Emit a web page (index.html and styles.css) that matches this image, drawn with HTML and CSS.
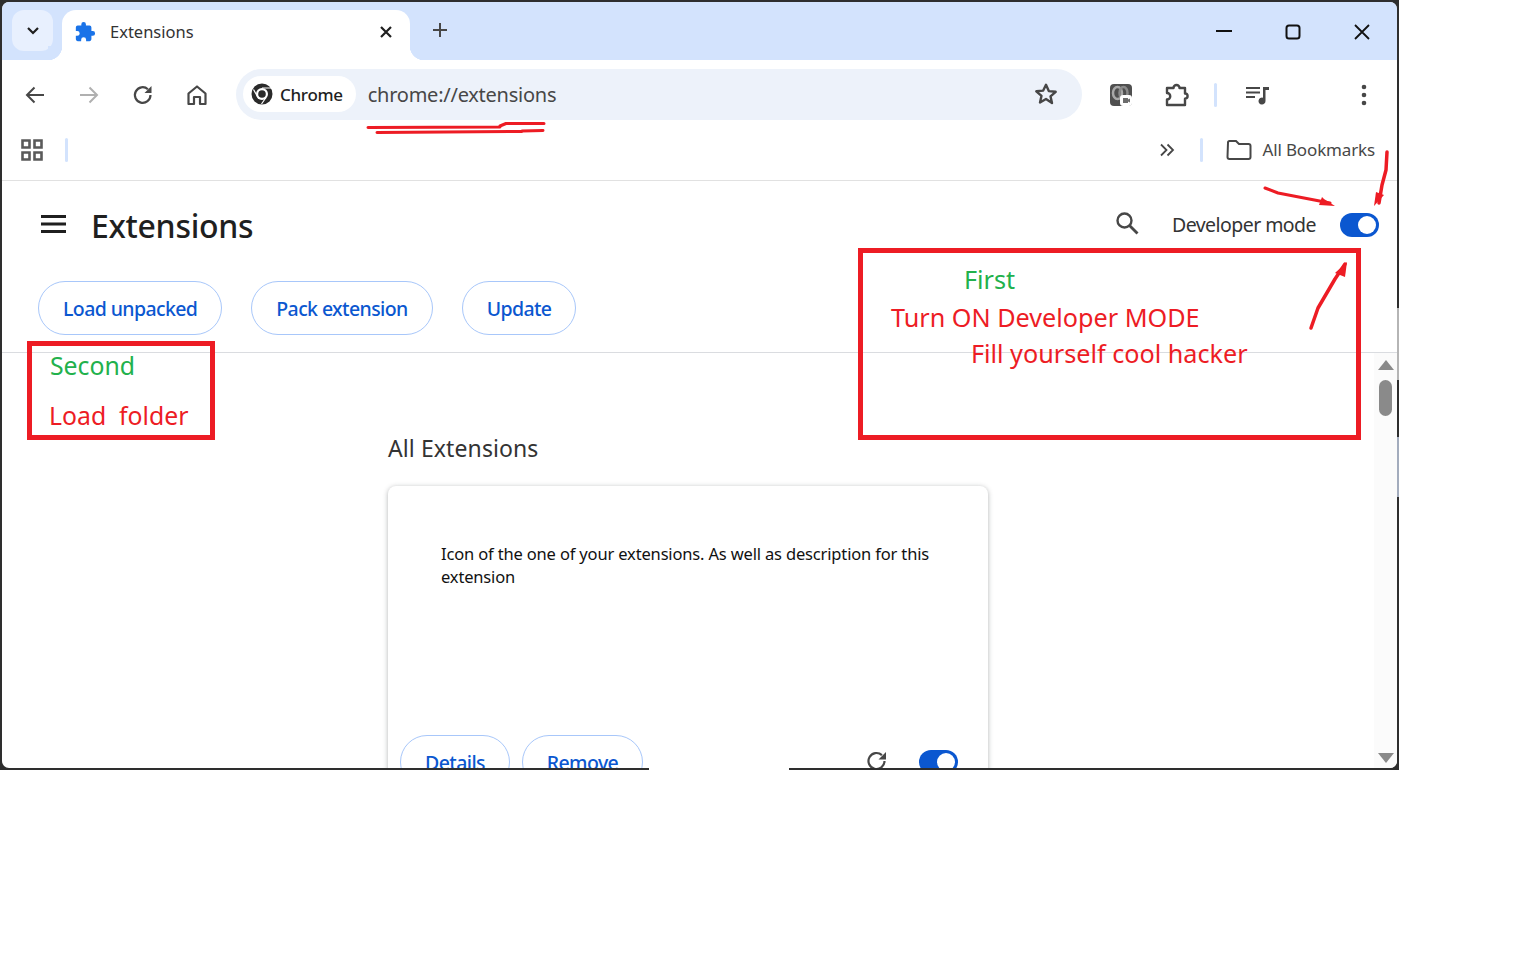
FILE: index.html
```html
<!DOCTYPE html>
<html lang="en">
<head>
  <meta charset="UTF-8">
  <title>Extensions</title>
  <link rel="stylesheet" href="styles.css">
</head>
<body>
  <div class="frame">
    <div class="window">
      <div class="tabstrip">
        <div class="tab-search">
          <svg width="16" height="16" viewBox="0 0 16 16"><path d="M3 5l5 5 5-5" fill="none" stroke="#1f1f1f" stroke-width="2.200"/></svg>
        </div>
        <div class="tab">
          <svg class="tab-icon" width="22" height="22" viewBox="0 0 24 24"><path d="M20.500 11H19V7a2 2 0 0 0-2-2h-4V3.500a2.500 2.500 0 0 0-5 0V5H4a2 2 0 0 0-2 2v3.800h1.500a2.700 2.700 0 0 1 0 5.400H2V20a2 2 0 0 0 2 2h3.800v-1.500a2.700 2.700 0 0 1 5.400 0V22H17a2 2 0 0 0 2-2v-4h1.500a2.500 2.500 0 0 0 0-5z" fill="#1a73e8"/></svg>
          <span class="tab-title">Extensions</span>
          <svg class="tab-close" width="14" height="14" viewBox="0 0 14 14"><path d="M2 2l10 10M12 2L2 12" stroke="#1f1f1f" stroke-width="2.200"/></svg>
        </div>
        <svg class="new-tab" width="18" height="18" viewBox="0 0 18 18"><path d="M9 2v14M2 9h14" stroke="#474747" stroke-width="2"/></svg>
        <div class="win-controls">
          <div class="win-btn"><svg width="16" height="16" viewBox="0 0 16 16"><path d="M0 7h16" stroke="#111" stroke-width="2"/></svg></div>
          <div class="win-btn"><svg width="16" height="16" viewBox="0 0 16 16"><rect x="1.500" y="1.500" width="13" height="13" rx="2.500" fill="none" stroke="#111" stroke-width="2"/></svg></div>
          <div class="win-btn"><svg width="16" height="16" viewBox="0 0 16 16"><path d="M1 1l14 14M15 1L1 15" stroke="#111" stroke-width="1.800"/></svg></div>
        </div>
      </div>

      <div class="toolbar">
        <div class="nav-btn"><svg width="24" height="24" viewBox="0 0 24 24"><path d="M21 12H4M11.500 4.500L4 12l7.500 7.500" fill="none" stroke="#474747" stroke-width="2"/></svg></div>
        <div class="nav-btn"><svg width="24" height="24" viewBox="0 0 24 24"><path d="M3 12h17M12.500 4.500L20 12l-7.500 7.500" fill="none" stroke="#b0b0b0" stroke-width="2"/></svg></div>
        <div class="nav-btn"><svg width="24" height="24" viewBox="0 0 24 24"><path d="M19.500 12a7.800 7.800 0 1 1-2.600-5.800" fill="none" stroke="#474747" stroke-width="2.200"/><path d="M20.500 3v7h-7z" fill="#474747"/></svg></div>
        <div class="nav-btn"><svg width="24" height="24" viewBox="0 0 24 24"><path d="M3.500 10.500L12 3.500l8.500 7V21H15v-7H9v7H3.500z" fill="none" stroke="#474747" stroke-width="2.200" stroke-linejoin="round"/></svg></div>
        <div class="omnibox">
          <div class="chip">
            <svg width="22" height="22" viewBox="0 0 22 22"><circle cx="11" cy="11" r="10.500" fill="#2a2a2a"/><circle cx="11" cy="11" r="6" fill="#fff"/><circle cx="11" cy="11" r="3.800" fill="#2a2a2a"/><path d="M11 5h9M7 14.500L2.500 6.500M15 14.500L10.500 21" stroke="#fff" stroke-width="1.200"/></svg>
            <span>Chrome</span>
          </div>
          <span class="url">chrome://extensions</span>
          <svg class="star" width="24" height="24" viewBox="0 0 24 24"><path d="M12 2.800l2.800 6.300 6.900.7-5.200 4.500 1.500 6.700L12 17l-6 3.500 1.500-6.700-5.200-4.500 6.900-.7z" fill="none" stroke="#474747" stroke-width="2.400" stroke-linejoin="round"/></svg>
        </div>
        <div class="ext-icon ext-first">
          <svg width="24" height="24" viewBox="0 0 24 24"><rect x="1" y="1" width="22" height="22" rx="4" fill="#4f4f4f"/><ellipse cx="8.500" cy="10" rx="4.500" ry="6" fill="none" stroke="#a8a8a8" stroke-width="2.500"/><ellipse cx="14.500" cy="10" rx="4" ry="6" fill="none" stroke="#8a8a8a" stroke-width="2.500"/><rect x="11" y="12" width="12" height="11" rx="3" fill="#fff"/><path d="M14 15h5v1.500l2-1v4l-2-1V20h-5z" fill="#6c6c6c"/></svg>
        </div>
        <div class="ext-icon">
          <svg width="26" height="26" viewBox="0 0 26 26"><path d="M3 6h6.500a3 3 0 0 1 6 0H21v5.500a2.600 2.600 0 0 1 0 5.200V23H3v-5.500a3 3 0 0 0 0-6.500z" fill="none" stroke="#474747" stroke-width="2.400" stroke-linejoin="round"/></svg>
        </div>
        <div class="divider divider-ext"></div>
        <div class="ext-icon ext-media">
          <svg width="24" height="24" viewBox="0 0 24 24"><path d="M1 5h14M1 9.500h14M1 14h9" stroke="#474747" stroke-width="2"/><path d="M18 4h6v3h-3.500v11a3.500 3.500 0 1 1-2.500-3.300z" fill="#474747"/></svg>
        </div>
        <div class="ext-icon ext-menu">
          <svg width="6" height="24" viewBox="0 0 6 24"><circle cx="3" cy="4" r="2.300" fill="#474747"/><circle cx="3" cy="12" r="2.300" fill="#474747"/><circle cx="3" cy="20" r="2.300" fill="#474747"/></svg>
        </div>
      </div>

      <div class="bookmarks">
        <svg class="apps" width="24" height="24" viewBox="0 0 24 24"><path d="M2.500 2.500h7v7h-7zM14.500 2.500h7v7h-7zM2.500 14.500h7v7h-7zM14.500 14.500h7v7h-7z" fill="none" stroke="#5a5a5a" stroke-width="2.600"/></svg>
        <div class="divider divider-apps"></div>
        <svg class="chevrons" width="16" height="16" viewBox="0 0 16 16"><path d="M2 2.500L7.500 8 2 13.500M8.500 2.500L14 8l-5.500 5.500" fill="none" stroke="#474747" stroke-width="1.800"/></svg>
        <div class="divider divider-more"></div>
        <svg class="folder" width="26" height="20" viewBox="0 0 26 20"><path d="M2 2.500a1.500 1.500 0 0 1 1.500-1.500h6.500l3 3h9.500a2 2 0 0 1 2 2v11a2 2 0 0 1-2 2h-19a2 2 0 0 1-2-2z" fill="none" stroke="#474747" stroke-width="2"/></svg>
        <span class="all-bookmarks">All Bookmarks</span>
      </div>

      <div class="page">
        <header class="page-header">
          <svg class="hamburger" width="25" height="18" viewBox="0 0 25 18"><path d="M0 1.500h25M0 9h25M0 16.500h25" stroke="#1f1f1f" stroke-width="3"/></svg>
          <h1>Extensions</h1>
          <svg class="search" width="26" height="26" viewBox="0 0 26 26"><circle cx="10.500" cy="10.500" r="7" fill="none" stroke="#474747" stroke-width="2.400"/><path d="M15.500 15.500l8 8" stroke="#474747" stroke-width="2.800"/></svg>
          <span class="dev-label">Developer mode</span>
          <div class="toggle"><div class="knob"></div></div>
        </header>
        <div class="actions">
          <button class="pill">Load unpacked</button>
          <button class="pill">Pack extension</button>
          <button class="pill">Update</button>
        </div>
        <div class="page-body">
          <div class="content">
            <h2>All Extensions</h2>
            <div class="card">
              <p>Icon of the one of your extensions. As well as description for this extension</p>
              <div class="card-footer">
                <button class="pill pill-small">Details</button>
                <button class="pill pill-small">Remove</button>
                <svg class="card-reload" width="24" height="24" viewBox="0 0 24 24"><path d="M19.500 12a8 8 0 1 1-2.600-5.900" fill="none" stroke="#474747" stroke-width="2.200"/><path d="M21 3v7.500h-7.500z" fill="#474747"/></svg>
                <div class="toggle"><div class="knob"></div></div>
              </div>
            </div>
          </div>
          <div class="scrollbar">
            <div class="arrow-up"></div>
            <div class="thumb"></div>
            <div class="arrow-down"></div>
          </div>
        </div>
      </div>
    </div>
  </div>

  <!-- hand drawn notes on top of the screenshot -->
  <div class="bottom-gap"></div>
  <div class="edge-light"></div>
  <div class="edge-blue"></div>

  <div class="note-box note-box-first"></div>
  <div class="note-box note-box-second"></div>
  <span class="note green note-first">First</span>
  <span class="note note-turn">Turn ON Developer MODE</span>
  <span class="note note-fill">Fill yourself cool hacker</span>
  <span class="note green note-second">Second</span>
  <span class="note note-load">Load&nbsp; folder</span>

  <svg class="scribbles" width="1536" height="960" viewBox="0 0 1536 960">
    <g fill="none" stroke="#ed1c24" stroke-linecap="round" stroke-linejoin="round">
      <path d="M368 127.500L500 127M500 126L506 123.500H544" stroke-width="3"/>
      <path d="M377 132.500L522 131.500M522 131L543 130.500" stroke-width="3"/>
      <path d="M1265 188L1278 193L1330 203" stroke-width="3"/>
      <path d="M1387 152L1386 170L1382 185L1379 203" stroke-width="3.500"/>
      <path d="M1311 328L1318 308L1335 279L1345 264" stroke-width="3.500"/>
    </g>
    <g fill="#ed1c24">
      <path d="M1335 206L1319 205L1322 197L1324 199z"/>
      <path d="M1374 206L1384 195L1376 192z"/>
      <path d="M1347 262L1345 277L1335 273z"/>
    </g>
  </svg>
</body>
</html>
```

FILE: styles.css
```css
* {
  margin: 0;
  padding: 0;
  box-sizing: border-box;
}

body {
  position: relative;
  width: 1536px;
  height: 960px;
  overflow: hidden;
  background: #fff;
  font-family: "Noto Sans", sans-serif;
  color: #1f1f1f;
}

button {
  font-family: inherit;
  background: #fff;
}

/* Browser window */
.frame {
  width: 1399px;
  height: 770px;
  padding: 2px;
  background: #2e2e2e;
}

.window {
  display: flex;
  flex-direction: column;
  height: 100%;
  border-radius: 7px;
  overflow: hidden;
  background: #fff;
}

/* Tab strip */
.tabstrip {
  display: flex;
  align-items: flex-start;
  flex: none;
  height: 58px;
  padding: 8px 0 0 10px;
  background: #d3e3fd;
}

.tab-search {
  display: flex;
  align-items: center;
  justify-content: center;
  width: 41px;
  height: 41px;
  border-radius: 12px;
  background: #e8f0fe;
}

.tab {
  position: relative;
  display: flex;
  align-items: center;
  width: 348px;
  height: 50px;
  margin-left: 9px;
  padding: 0 17px 6px 12px;
  border-radius: 14px 14px 0 0;
  background: #fff;
}

.tab::before,
.tab::after {
  content: "";
  position: absolute;
  bottom: 0;
  width: 14px;
  height: 14px;
}

.tab::before {
  left: -14px;
  background: radial-gradient(circle at 0 0, #d3e3fd 14px, #fff 14.500px);
}

.tab::after {
  right: -14px;
  background: radial-gradient(circle at 100% 0, #d3e3fd 14px, #fff 14.500px);
}

.tab-icon {
  flex: none;
}

.tab-title {
  flex: 1;
  margin: -2px 0 0 14px;
  font-size: 16.500px;
  color: #333;
}

.new-tab {
  margin: 11px 0 0 21px;
}

.win-controls {
  display: flex;
  margin-left: auto;
  padding-right: 1px;
}

.win-btn {
  display: flex;
  align-items: center;
  justify-content: center;
  width: 69px;
  height: 44px;
}

/* Toolbar */
.toolbar {
  position: relative;
  display: flex;
  align-items: center;
  flex: none;
  height: 70px;
  padding-left: 6px;
  background: #fff;
  border-radius: 12px 12px 0 0;
}

.nav-btn {
  display: flex;
  align-items: center;
  justify-content: center;
  flex: none;
  width: 54px;
  height: 40px;
}

.omnibox {
  display: flex;
  align-items: center;
  flex: none;
  width: 846px;
  height: 51px;
  margin: 0 0 2px 12px;
  padding: 0 24px 0 7px;
  border-radius: 26px;
  background: #edf2fa;
}

.chip {
  display: flex;
  align-items: center;
  gap: 7px;
  height: 36px;
  padding: 0 13px 0 8px;
  border-radius: 18px;
  background: #fff;
  font-size: 17px;
  font-weight: 500;
  letter-spacing: -0.3px;
  color: #1f1f1f;
}

.url {
  flex: 1;
  margin-left: 12px;
  font-size: 20px;
  letter-spacing: -0.25px;
  color: #474747;
}

.ext-icon {
  display: flex;
  align-items: center;
  justify-content: center;
  flex: none;
  width: 26px;
}

.ext-first {
  margin: 0 30px 0 26px;
}

.ext-media {
  margin-left: 27px;
}

.ext-menu {
  margin-left: 81px;
}

.divider {
  flex: none;
  width: 3px;
  height: 24px;
  border-radius: 2px;
  background: #d3e3fd;
}

.divider-ext {
  margin-left: 24px;
}

/* Bookmarks bar */
.bookmarks {
  display: flex;
  align-items: center;
  flex: none;
  height: 51px;
  padding-bottom: 11px;
  border-bottom: 1px solid #e1e1e1;
}

.apps {
  margin-left: 18px;
}

.divider-apps {
  margin-left: 21px;
}

.chevrons {
  margin-left: auto;
}

.divider-more {
  margin-left: 25px;
}

.folder {
  margin-left: 23px;
}

.all-bookmarks {
  margin: 0 22px 0 11px;
  font-size: 17px;
  letter-spacing: -0.15px;
  color: #474747;
}

/* Extensions page */
.page {
  display: flex;
  flex-direction: column;
  flex: 1;
  min-height: 0;
}

.page-header {
  display: flex;
  align-items: center;
  flex: none;
  height: 90px;
  padding-left: 39px;
}

.hamburger {
  flex: none;
  margin-top: -5px;
}

h1 {
  margin-left: 25px;
  font-size: 32px;
  font-weight: 500;
  letter-spacing: -0.3px;
  line-height: 1;
  color: #1f1f1f;
}

.search {
  margin-left: auto;
  margin-top: -6px;
  margin-right: -3px;
  transform: translateX(1px);
}

.dev-label {
  margin-left: 36px;
  margin-top: -4px;
  font-size: 19.500px;
  letter-spacing: -0.55px;
  color: #333;
}

.toggle {
  position: relative;
  flex: none;
  width: 39px;
  height: 24px;
  border-radius: 12px;
  background: #0b57d0;
}

.page-header .toggle {
  margin: -3px 18px 0 24px;
}

.knob {
  position: absolute;
  top: 3px;
  right: 3px;
  width: 18px;
  height: 18px;
  border-radius: 50%;
  background: #fff;
}

.actions {
  display: flex;
  align-items: flex-start;
  flex: none;
  height: 82px;
  padding: 10px 0 0 36px;
  gap: 29px;
  border-bottom: 1px solid #dadce0;
}

.pill {
  height: 54px;
  padding: 0 24px;
  border: 1px solid #a8c7fa;
  border-radius: 27px;
  font-size: 19.500px;
  font-weight: 500;
  letter-spacing: -0.6px;
  color: #0b57d0;
}

.pill-small {
  width: 110px;
  padding: 0;
}

.pill-small + .pill-small {
  width: 121px;
  margin-left: 12px;
}

.page-body {
  display: flex;
  flex: 1;
  min-height: 0;
}

.content {
  flex: 1;
  min-width: 0;
  overflow: hidden;
  padding: 79px 0 0 386px;
}

h2 {
  font-size: 23px;
  font-weight: 400;
  line-height: 32px;
  letter-spacing: 0.1px;
  color: #333;
}

.card {
  display: flex;
  flex-direction: column;
  width: 600px;
  height: 320px;
  margin-top: 22px;
  padding: 56px 12px 0;
  border-radius: 8px;
  background: #fff;
  box-shadow: 0 1px 5px rgba(60, 64, 67, 0.4);
}

.card p {
  width: 500px;
  margin-left: 41px;
  font-size: 16.500px;
  line-height: 23px;
  letter-spacing: -0.16px;
  color: #111;
}

.card-footer {
  display: flex;
  align-items: flex-start;
  margin-top: auto;
  height: 71px;
}

.card-reload {
  margin: 14px 0 0 auto;
}

.card-footer .toggle {
  margin: 15px 18px 0 30px;
}

.scrollbar {
  flex: none;
  display: flex;
  flex-direction: column;
  align-items: center;
  width: 23px;
  padding-top: 7px;
  background: #fbfbfb;
}

.arrow-up {
  width: 0;
  height: 0;
  border-left: 8px solid transparent;
  border-right: 8px solid transparent;
  border-bottom: 10px solid #8a8a8a;
}

.thumb {
  width: 13px;
  height: 36px;
  margin-top: 10px;
  border-radius: 7px;
  background: #8a8a8a;
}

.arrow-down {
  width: 0;
  height: 0;
  margin-top: auto;
  margin-bottom: 5px;
  border-left: 8px solid transparent;
  border-right: 8px solid transparent;
  border-top: 10px solid #8a8a8a;
}

/* Screenshot leftovers and notes, placed on the picture */
.bottom-gap {
  position: absolute;
  left: 649px;
  top: 768px;
  width: 140px;
  height: 2px;
  background: #fff;
}

.edge-light {
  position: absolute;
  left: 1397px;
  top: 308px;
  width: 2px;
  height: 72px;
  background: #b5b5b5;
}

.edge-blue {
  position: absolute;
  left: 1397px;
  top: 437px;
  width: 2px;
  height: 60px;
  background: #a3acbd;
}

.note-box {
  position: absolute;
  border: 5px solid #ed1c24;
}

.note-box-first {
  left: 858px;
  top: 248px;
  width: 503px;
  height: 192px;
}

.note-box-second {
  left: 27px;
  top: 341px;
  width: 188px;
  height: 99px;
}

.note {
  position: absolute;
  font-size: 25.200px;
  line-height: 36px;
  white-space: nowrap;
  color: #ed1c24;
}

.green {
  color: #22b14c;
}

.note-first {
  left: 964px;
  top: 261px;
}

.note-turn {
  left: 891px;
  top: 299px;
}

.note-fill {
  left: 971px;
  top: 335px;
}

.note-second {
  left: 50px;
  top: 347px;
  font-size: 24.800px;
}

.note-load {
  left: 49px;
  top: 397px;
  font-size: 24.800px;
}

.scribbles {
  position: absolute;
  left: 0;
  top: 0;
  pointer-events: none;
}
```
